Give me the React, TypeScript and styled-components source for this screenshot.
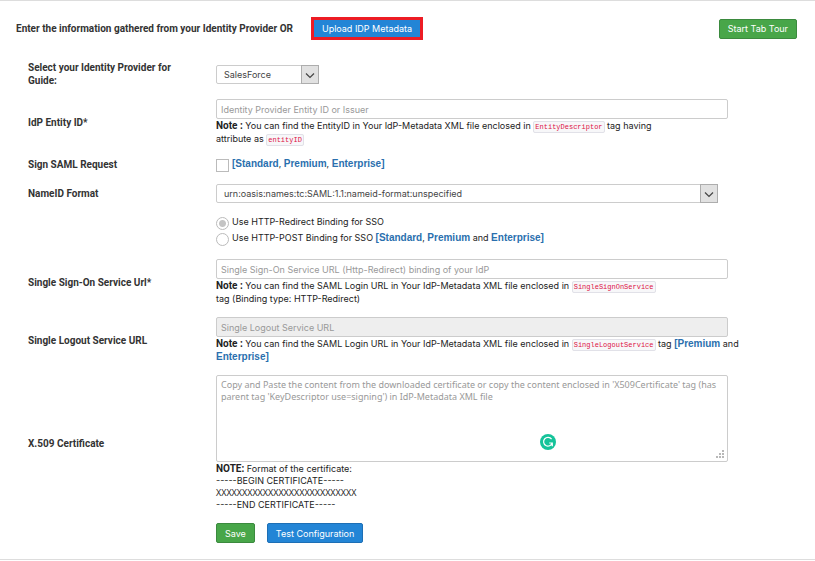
import React from 'react';
import styled, { createGlobalStyle, css } from 'styled-components';

const GlobalStyle = createGlobalStyle`
  *, *::before, *::after { box-sizing: border-box; }
  body { margin: 0; background: #fff; }
  button, input, select, textarea { font: inherit; margin: 0; }
`;

const Page = styled.main`
  border-top: 1px solid #ddd;
  border-bottom: 1px solid #ddd;
  padding: 16px 18px 16px 16px;
  font: 9px/13px Inter, 'Liberation Sans', sans-serif;
  color: #222;
`;

const Header = styled.header`
  display: flex;
  align-items: center;
  margin-bottom: 21px;
`;

const Title = styled.h1`
  margin: 0 18px 0 0;
  font: 700 10px/13px Roboto, sans-serif;
  color: #333;
`;

const Button = styled.button<{ $tone: 'green' | 'blue'; $marked?: boolean; $end?: boolean }>`
  height: 20px;
  padding: 0 8px;
  border: 1px solid ${p => (p.$tone === 'green' ? '#3b8a3e' : '#1d6fb5')};
  border-radius: 2px;
  background: ${p => (p.$tone === 'green' ? '#48a649' : '#2385d6')};
  color: #fff;
  line-height: 13px;
  white-space: nowrap;
  ${p => p.$marked && css`
    height: 23px;
    border: 3px solid #ed1c24;
    border-radius: 0;
  `}
  ${p => p.$end && css`margin-left: auto;`}
`;

const Form = styled.form`
  display: grid;
  gap: 12px;
  padding: 0 57px 0 12px;
`;

const Row = styled.div`
  display: grid;
  grid-template-columns: 188px minmax(0, 1fr);
  align-items: center;
`;

const Label = styled.label`
  padding-right: 34px;
  font: 700 10px/13px Roboto, sans-serif;
  color: #333;
`;

const Content = styled.div`
  grid-column: 2;
  min-width: 0;
`;

const Field = styled.input`
  display: block;
  width: calc(100% - 12px);
  height: 20px;
  padding: 0 4px;
  border: 1px solid #ccc;
  border-radius: 2px;
  background: #fff;
  color: #333;
  &::placeholder { color: #999; opacity: 1; }
  &:disabled { background: #eee; }
`;

const Note = styled.p`
  margin: 0;
  white-space: nowrap;
`;

const Strong = styled.b`
  font: 700 10px/10px Roboto, sans-serif;
`;

const Tier = styled.a`
  color: #2a6fae;
  font: 700 10px/10px 'Liberation Sans', sans-serif;
  text-decoration: none;
`;

const Code = styled.code`
  padding: 1px;
  border: 1px solid #e1e1e8;
  border-radius: 2px;
  background: #f7f7f9;
  color: #d14;
  font: 7px/7px 'Liberation Mono', monospace;
`;

const SelectBox = styled.div<{ $wide?: boolean }>`
  position: relative;
  width: ${p => (p.$wide ? 'calc(100% - 22px)' : '103px')};
`;

const Select = styled.select`
  display: block;
  appearance: none;
  width: 100%;
  height: 19px;
  padding: 0 22px 0 7px;
  border: 1px solid #ccc;
  border-radius: 2px;
  background: #fff;
  color: #444;
`;

const Arrow = styled.svg`
  position: absolute;
  top: 0;
  right: 0;
  pointer-events: none;
`;

const Option = styled.label`
  display: flex;
  align-items: flex-start;
  gap: 3px;
  height: 16px;
  line-height: 13px;
`;

const OptionLine = styled.div`
  display: flex;
  align-items: flex-start;
  gap: 3px;
  line-height: 13px;
`;

const Toggle = styled.input`
  appearance: none;
  flex: none;
  width: 13px;
  height: 13px;
  margin: 2px 0 0;
  border: 1px solid #bbb;
  border-radius: ${p => (p.type === 'radio' ? '50%' : '0')};
  background: #fff;
  &[type='radio']:checked { background: radial-gradient(circle, #c4c4c4 3px, #fff 4px); }
  &[type='checkbox']:checked { background: #2385d6; }
`;

const AreaBox = styled.div`
  position: relative;
  width: calc(100% - 12px);
`;

const TextArea = styled.textarea`
  display: block;
  width: 100%;
  height: 87px;
  padding: 3px 2px 3px 4px;
  border: 1px solid #ccc;
  border-radius: 2px;
  resize: none;
  font: 9px/12px 'Noto Sans', sans-serif;
  color: #333;
  &::placeholder { color: #999; opacity: 1; }
`;

const Badge = styled.svg`
  position: absolute;
  right: 172px;
  bottom: 12px;
`;

const Grip = styled.svg`
  position: absolute;
  right: 3px;
  bottom: 3px;
`;

const CertNote = styled.p`
  margin: 1px 0 0;
  line-height: 12px;
`;

const Filler = styled.span`
  font-family: 'Open Sans', sans-serif;
  line-height: 10px;
`;

const Actions = styled.div`
  grid-column: 2;
  display: flex;
  gap: 12px;
`;

function DropDown({ id, value, wide }: { id: string; value: string; wide?: boolean }) {
  return (
    <SelectBox $wide={wide}>
      <Select id={id} defaultValue={value}>
        <option>{value}</option>
      </Select>
      <Arrow width="18" height="19" viewBox="0 0 18 19" aria-hidden="true">
        <rect x="0.5" y="0.5" width="17" height="18" fill="#e1e1e1" stroke="#adadad" />
        <path d="M5 8.5l4 4 4-4" fill="none" stroke="#444" strokeWidth="1.2" />
      </Arrow>
    </SelectBox>
  );
}

export default function App() {
  return (
    <>
      <GlobalStyle />
      <Page>
        <Header>
          <Title>Enter the information gathered from your Identity Provider OR</Title>
          <Button type="button" $tone="blue" $marked>Upload IDP Metadata</Button>
          <Button type="button" $tone="green" $end>Start Tab Tour</Button>
        </Header>
        <Form onSubmit={e => e.preventDefault()}>
          <Row>
            <Label htmlFor="idp">Select your Identity Provider for Guide:</Label>
            <Content><DropDown id="idp" value="SalesForce" /></Content>
          </Row>
          <Row>
            <Label htmlFor="entity">IdP Entity ID*</Label>
            <Content>
              <Field id="entity" placeholder="Identity Provider Entity ID or Issuer" />
              <Note>
                <Strong>Note :</Strong> You can find the EntityID in Your IdP-Metadata XML file enclosed in <Code>EntityDescriptor</Code> tag having<br />
                attribute as <Code>entityID</Code>
              </Note>
            </Content>
          </Row>
          <Row>
            <Label htmlFor="sign">Sign SAML Request</Label>
            <Content>
              <OptionLine>
                <Toggle id="sign" type="checkbox" />
                <span><Tier href="#plans">[Standard</Tier>, <Tier href="#plans">Premium</Tier>, <Tier href="#plans">Enterprise]</Tier></span>
              </OptionLine>
            </Content>
          </Row>
          <Row>
            <Label htmlFor="nameid">NameID Format</Label>
            <Content><DropDown id="nameid" wide value="urn:oasis:names:tc:SAML:1.1:nameid-format:unspecified" /></Content>
          </Row>
          <Row>
            <Content>
              <Option>
                <Toggle type="radio" name="binding" defaultChecked />
                <span>Use HTTP-Redirect Binding for SSO</span>
              </Option>
              <Option>
                <Toggle type="radio" name="binding" />
                <span>Use HTTP-POST Binding for SSO <Tier href="#plans">[Standard</Tier>, <Tier href="#plans">Premium</Tier> and <Tier href="#plans">Enterprise]</Tier></span>
              </Option>
            </Content>
          </Row>
          <Row>
            <Label htmlFor="sso">Single Sign-On Service Url*</Label>
            <Content>
              <Field id="sso" placeholder="Single Sign-On Service URL (Http-Redirect) binding of your IdP" />
              <Note>
                <Strong>Note :</Strong> You can find the SAML Login URL in Your IdP-Metadata XML file enclosed in <Code>SingleSignOnService</Code><br />
                tag (Binding type: HTTP-Redirect)
              </Note>
            </Content>
          </Row>
          <Row>
            <Label htmlFor="slo">Single Logout Service URL</Label>
            <Content>
              <Field id="slo" disabled placeholder="Single Logout Service URL" />
              <Note>
                <Strong>Note :</Strong> You can find the SAML Login URL in Your IdP-Metadata XML file enclosed in <Code>SingleLogoutService</Code> tag <Tier href="#plans">[Premium</Tier> and<br />
                <Tier href="#plans">Enterprise]</Tier>
              </Note>
            </Content>
          </Row>
          <Row>
            <Label htmlFor="cert">X.509 Certificate</Label>
            <Content>
              <AreaBox>
                <TextArea id="cert" placeholder="Copy and Paste the content from the downloaded certificate or copy the content enclosed in 'X509Certificate' tag (has parent tag 'KeyDescriptor use=signing') in IdP-Metadata XML file" />
                <Badge width="16" height="16" viewBox="0 0 16 16" aria-hidden="true">
                  <circle cx="8" cy="8" r="8" fill="#15c39a" />
                  <path d="M11.6 5.2A4.4 4.4 0 1 0 12.2 9H9.2M12.3 9v3.2" fill="none" stroke="#fff" strokeWidth="1.2" />
                </Badge>
                <Grip width="9" height="9" viewBox="0 0 9 9" fill="#b8b8b8" aria-hidden="true">
                  <path d="M6 0h2v2H6zM3 3h2v2H3zM6 3h2v2H6zM0 6h2v2H0zM3 6h2v2H3zM6 6h2v2H6z" />
                </Grip>
              </AreaBox>
              <CertNote>
                <Strong>NOTE:</Strong> Format of the certificate:<br />
                -----BEGIN CERTIFICATE-----<br />
                <Filler>XXXXXXXXXXXXXXXXXXXXXXXXXXX</Filler><br />
                -----END CERTIFICATE-----
              </CertNote>
            </Content>
          </Row>
          <Row>
            <Actions>
              <Button type="submit" $tone="green">Save</Button>
              <Button type="button" $tone="blue">Test Configuration</Button>
            </Actions>
          </Row>
        </Form>
      </Page>
    </>
  );
}
